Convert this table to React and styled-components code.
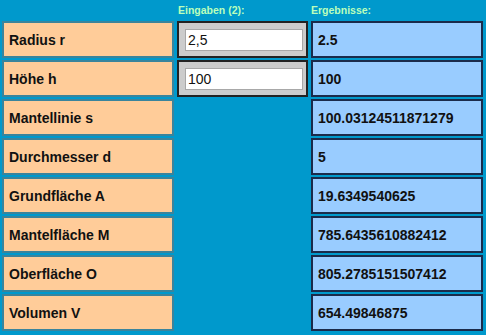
import React from 'react';
import styled, { createGlobalStyle } from 'styled-components';

const GlobalStyle = createGlobalStyle`
body {
  margin: 0;
  background: #0099cc;
  font-family: "Liberation Sans", Arial, sans-serif;
}
`;

const Wrapper = styled.div`
display: grid;
grid-template-columns: 172px 131px 172px;
grid-template-rows: 19px;
grid-auto-rows: 37px;
column-gap: 3px;
row-gap: 2px;
padding-left: 2px;
width: 486px;
height: 335px;
box-sizing: border-box;
background: #0099cc;
`;

const Head = styled.div`
grid-column: ${(props) => props.col};
align-self: center;
padding-left: ${(props) => props.col === 2 ? "1px" : "0px"};
font-size: 10.5px;
font-weight: bold;
color: #bbffbb;
`;

const Cell = styled.div`
display: flex;
align-items: center;
box-sizing: border-box;
padding-left: 5px;
font-size: 14px;
font-weight: bold;
color: #111;
border: 2px solid ${(props) =>
  props.type === "label" ? "#3a849c" : props.type === "input" ? "#222" : "#1b2b4b"};
background-color: ${(props) =>
  props.type === "label" ? "#ffcc99" : props.type === "input" ? "#cccccc" : "#99ccff"};
`;

const Empty = styled.div``;

const Input = styled.input`
width: 118px;
height: 22px;
box-sizing: border-box;
margin-left: 1px;
padding: 0 2px;
border: 1px solid #a8a8a8;
background: #fff;
font-family: "Liberation Sans", Arial, sans-serif;
font-size: 14px;
color: #111;
outline: none;
`;

const rows = [
  { label: "Radius r", input: "2,5", result: "2.5" },
  { label: "Höhe h", input: "100", result: "100" },
  { label: "Mantellinie s", result: "100.03124511871279" },
  { label: "Durchmesser d", result: "5" },
  { label: "Grundfläche A", result: "19.6349540625" },
  { label: "Mantelfläche M", result: "785.6435610882412" },
  { label: "Oberfläche O", result: "805.2785151507412" },
  { label: "Volumen V", result: "654.49846875" },
];

const App = () => {
  return (
    <>
      <GlobalStyle />
      <Wrapper>
        <Empty />
        <Head col={2}>Eingaben (2):</Head>
        <Head col={3}>Ergebnisse:</Head>
        {rows.map((row) => (
          <React.Fragment key={row.label}>
            <Cell type="label">{row.label}</Cell>
            {row.input !== undefined ? (
              <Cell type="input">
                <Input defaultValue={row.input} />
              </Cell>
            ) : (
              <Empty />
            )}
            <Cell type="result">{row.result}</Cell>
          </React.Fragment>
        ))}
      </Wrapper>
    </>
  );
};

export default App;
